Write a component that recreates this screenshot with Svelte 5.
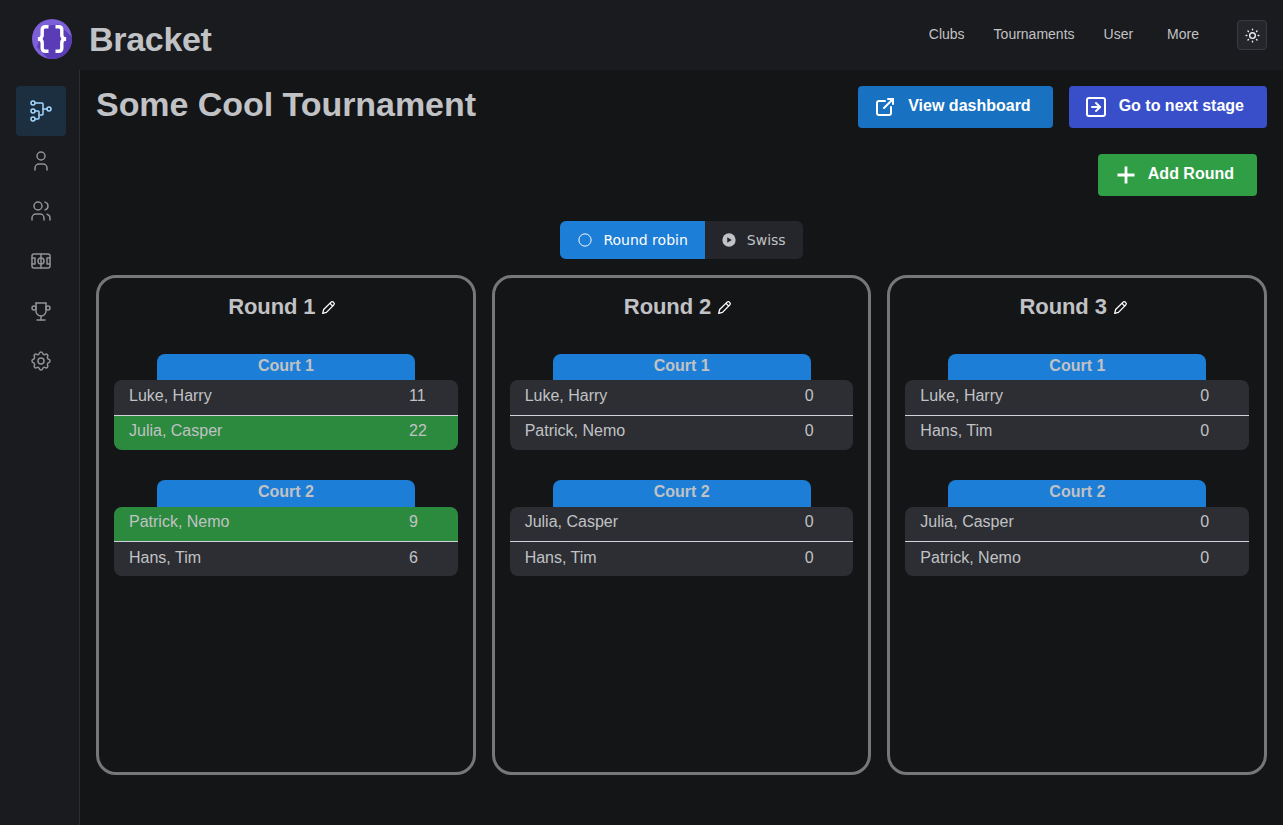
<script>
  const navLinks = ['Clubs', 'Tournaments', 'User', 'More'];

  const sideIcons = [
    { name: 'brackets', active: true, svg: '<circle cx="4" cy="4" r="2"/><circle cx="20" cy="10" r="2"/><circle cx="4" cy="12" r="2"/><circle cx="4" cy="20" r="2"/><path d="M6 12h3a1 1 0 0 1 1 1v6a1 1 0 0 1 -1 1h-3"/><path d="M6 4h7a1 1 0 0 1 1 1v10a1 1 0 0 1 -1 1h-2"/><path d="M14 10h4"/>' },
    { name: 'player', svg: '<circle cx="12" cy="7" r="4"/><path d="M6 21v-2a4 4 0 0 1 4 -4h4a4 4 0 0 1 4 4v2"/>' },
    { name: 'teams', svg: '<circle cx="9" cy="7" r="4"/><path d="M3 21v-2a4 4 0 0 1 4 -4h4a4 4 0 0 1 4 4v2"/><path d="M16 3.13a4 4 0 0 1 0 7.75"/><path d="M21 21v-2a4 4 0 0 0 -3 -3.85"/>' },
    { name: 'courts', svg: '<rect x="3" y="5" width="18" height="14" rx="2"/><path d="M12 5v14"/><circle cx="12" cy="12" r="3"/><path d="M3 9h3v6h-3"/><path d="M21 9h-3v6h3"/>' },
    { name: 'stages', svg: '<path d="M8 21h8"/><path d="M12 17v4"/><path d="M7 4h10"/><path d="M17 4v8a5 5 0 0 1 -10 0v-8"/><circle cx="5" cy="9" r="2"/><circle cx="19" cy="9" r="2"/>' },
    { name: 'settings', svg: '<path d="M10.325 4.317c.426 -1.756 2.924 -1.756 3.35 0a1.724 1.724 0 0 0 2.573 1.066c1.543 -.94 3.31 .826 2.37 2.37a1.724 1.724 0 0 0 1.065 2.572c1.756 .426 1.756 2.924 0 3.35a1.724 1.724 0 0 0 -1.066 2.573c.94 1.543 -.826 3.31 -2.37 2.37a1.724 1.724 0 0 0 -2.572 1.065c-.426 1.756 -2.924 1.756 -3.35 0a1.724 1.724 0 0 0 -2.573 -1.066c-1.543 .94 -3.31 -.826 -2.37 -2.37a1.724 1.724 0 0 0 -1.065 -2.572c-1.756 -.426 -1.756 -2.924 0 -3.35a1.724 1.724 0 0 0 1.066 -2.573c-.94 -1.543 .826 -3.31 2.37 -2.37c1 .608 2.296 .07 2.572 -1.065z"/><circle cx="12" cy="12" r="3"/>' }
  ];

  const rounds = [
    { title: 'Round 1', matches: [
      { court: 'Court 1', teams: [['Luke, Harry', 11], ['Julia, Casper', 22]] },
      { court: 'Court 2', teams: [['Patrick, Nemo', 9], ['Hans, Tim', 6]] }
    ]},
    { title: 'Round 2', matches: [
      { court: 'Court 1', teams: [['Luke, Harry', 0], ['Patrick, Nemo', 0]] },
      { court: 'Court 2', teams: [['Julia, Casper', 0], ['Hans, Tim', 0]] }
    ]},
    { title: 'Round 3', matches: [
      { court: 'Court 1', teams: [['Luke, Harry', 0], ['Hans, Tim', 0]] },
      { court: 'Court 2', teams: [['Julia, Casper', 0], ['Patrick, Nemo', 0]] }
    ]}
  ];

  const isWinner = (teams, i) => teams[i][1] > teams[1 - i][1];
</script>

<header class="topbar">
  <div class="brand">
    <svg class="logo" viewBox="0 0 40 40" aria-hidden="true">
      <clipPath id="disc"><circle cx="20" cy="20" r="20"/></clipPath>
      <circle cx="20" cy="20" r="20" fill="#7d5fd8"/>
      <path d="M13 7L27 5.500L44 22V44H20L5 28z" fill="#5a3cb6" clip-path="url(#disc)"/>
      <path d="M16.500 7.800h-3c-2 0-3.300 1-3.300 3v5.500c0 2-1.500 3.500-4.200 3.700 2.700.2 4.200 1.700 4.200 3.700v5.500c0 2 1.300 3 3.300 3h3M23.500 7.800h3c2 0 3.300 1 3.300 3v5.500c0 2 1.500 3.500 4.200 3.700-2.700.2-4.200 1.700-4.200 3.700v5.500c0 2-1.300 3-3.300 3h-3" fill="none" stroke="#fff" stroke-width="3.400"/>
    </svg>
    <span class="brand-name">Bracket</span>
  </div>
  <nav class="nav">
    {#each navLinks as link}
      <span class="nav-link">{link}</span>
    {/each}
    <button class="theme-btn" aria-label="Toggle theme">
      <svg viewBox="0 0 24 24" class="ic"><circle cx="12" cy="12" r="4"/><path d="M3 12h1m8 -9v1m8 8h1m-9 8v1m-6.400 -15.400l.7 .7m12.100 -.7l-.7 .7m0 11.400l.7 .7m-12.100 -.7l-.7 .7"/></svg>
    </button>
  </nav>
</header>

<div class="shell">
  <aside class="sidebar">
    {#each sideIcons as item}
      <div class="side-item" class:active={item.active} title={item.name}>
        <svg viewBox="0 0 24 24" class="ic">{@html item.svg}</svg>
      </div>
    {/each}
  </aside>

  <main class="main">
    <div class="title-row">
      <h1>Some Cool Tournament</h1>
      <div class="actions">
        <button class="btn blue">
          <svg viewBox="0 0 24 24" class="ic"><path d="M12 6h-6a2 2 0 0 0 -2 2v10a2 2 0 0 0 2 2h10a2 2 0 0 0 2 -2v-6"/><path d="M11 13l9 -9"/><path d="M15 4h5v5"/></svg>
          <span>View dashboard</span>
        </button>
        <button class="btn indigo">
          <svg viewBox="0 0 24 24" class="ic"><rect x="3" y="3" width="18" height="18" rx="2"/><path d="M12 16l4 -4l-4 -4"/><path d="M8 12h8"/></svg>
          <span>Go to next stage</span>
        </button>
      </div>
    </div>

    <div class="add-row">
      <button class="btn green">
        <svg viewBox="0 0 24 24" class="ic plus"><path d="M12 3.500v17M3.500 12h17"/></svg>
        <span>Add Round</span>
      </button>
    </div>

    <div class="segment-row">
      <div class="segment">
        <div class="seg on">
          <svg viewBox="0 0 16 16" class="seg-ic"><circle cx="8" cy="8" r="7" fill="none" stroke="currentColor" stroke-width="1.100"/></svg>
          Round robin
        </div>
        <div class="seg">
          <svg viewBox="0 0 16 16" class="seg-ic"><circle cx="8" cy="8" r="7.600" fill="currentColor"/><path d="M6 4.800v6.400L11.200 8z" fill="#25262b"/></svg>
          Swiss
        </div>
      </div>
    </div>

    <section class="rounds">
      {#each rounds as round}
        <div class="round">
          <h3 class="round-title">
            {round.title}
            <svg viewBox="0 0 16 16" class="pencil"><path d="M1.800 14.200l1-4 7.700-7.700a2 2 0 0 1 3 3l-7.700 7.700z"/><path d="M9.500 3.500l3 3"/></svg>
          </h3>
          {#each round.matches as match}
            <div class="match">
              <div class="court">{match.court}</div>
              <div class="teams">
                {#each match.teams as team, i}
                  <div class="team" class:win={isWinner(match.teams, i)} class:first={i === 0}>
                    <span>{team[0]}</span>
                    <span class="score">{team[1]}</span>
                  </div>
                {/each}
              </div>
            </div>
          {/each}
        </div>
      {/each}
    </section>
  </main>
</div>

<style>
  :global(body) {
    background: #141517;
    color: #c1c2c5;
    font-family: "Liberation Sans", Arial, sans-serif;
  }
  .ic {
    fill: none;
    stroke: currentColor;
    stroke-width: 1.5;
    stroke-linecap: round;
    stroke-linejoin: round;
    flex: none;
  }
  .topbar {
    height: 70px;
    background: #1a1b1e;
    display: flex;
    align-items: flex-start;
    justify-content: space-between;
    padding: 19px 16px 0 32px;
    box-sizing: border-box;
  }
  .brand {
    display: flex;
    align-items: center;
    gap: 17px;
  }
  .logo {
    width: 40px;
    height: 40px;
  }
  .brand-name {
    font-size: 34px;
    font-weight: 700;
    line-height: 40px;
    letter-spacing: -0.3px;
  }
  .nav {
    display: flex;
    align-items: center;
    font-size: 14px;
    margin-top: 1px;
  }
  .nav-link { margin-top: -3px; }
  .nav-link:nth-child(1) { margin-right: 29px; }
  .nav-link:nth-child(2) { margin-right: 29px; }
  .nav-link:nth-child(3) { margin-right: 34px; }
  .nav-link:nth-child(4) { margin-right: 38px; }
  .theme-btn {
    width: 30px;
    height: 30px;
    padding: 0;
    display: flex;
    align-items: center;
    justify-content: center;
    background: #25262b;
    border: 1px solid #373a40;
    border-radius: 4px;
    color: #e9ecef;
  }
  .theme-btn svg {
    width: 17px;
    height: 17px;
    stroke-width: 2;
  }
  .shell {
    display: flex;
    min-height: 755px;
  }
  .sidebar {
    width: 80px;
    box-sizing: border-box;
    flex: none;
    background: #1a1b1e;
    border-right: 1px solid #2c2e33;
    padding: 16px 13px 0 16px;
    display: flex;
    flex-direction: column;
  }
  .side-item {
    width: 50px;
    height: 50px;
    border-radius: 4px;
    display: flex;
    align-items: center;
    justify-content: center;
    color: #909296;
  }
  .side-item svg {
    width: 24px;
    height: 24px;
  }
  .side-item.active {
    background: rgba(34, 139, 230, 0.18);
    color: #a5d8ff;
  }
  .main {
    flex: 1;
    min-width: 0;
    padding: 16px;
  }
  .title-row {
    display: flex;
    justify-content: space-between;
    align-items: flex-start;
  }
  h1 {
    margin: 0;
    font-size: 34px;
    line-height: 37px;
    font-weight: 700;
    letter-spacing: -0.05px;
  }
  .actions {
    display: flex;
    gap: 16px;
  }
  .btn {
    height: 42px;
    border: 0;
    border-radius: 4px;
    display: flex;
    align-items: center;
    color: #fff;
    font: 700 16px "Liberation Sans", Arial, sans-serif;
    padding: 0 23px 0 15px;
    gap: 11px;
  }
  .btn span {
    margin-top: -3px;
  }
  .btn svg {
    width: 24px;
    height: 24px;
    stroke-width: 2;
  }
  .btn svg.plus {
    stroke-width: 2.800;
    stroke-linecap: butt;
    transform: translateX(1px);
  }
  .btn.blue { background: #1971c2; padding-right: 22px; }
  .btn.indigo { background: #384fc9; }
  .btn.green { background: #2f9e44; }
  .add-row {
    display: flex;
    justify-content: flex-end;
    padding-right: 10px;
    margin-top: 26px;
  }
  .segment-row {
    display: flex;
    justify-content: center;
    margin-top: 25px;
  }
  .segment {
    display: flex;
    height: 38px;
    border-radius: 6px;
    overflow: hidden;
    background: #25262b;
    font-family: "DejaVu Sans", sans-serif;
    font-size: 14px;
  }
  .seg {
    display: flex;
    align-items: center;
    gap: 11px;
    padding: 0 17px;
  }
  .seg.on {
    background: #1c7ed6;
    color: #fff;
    padding-left: 18px;
  }
  .seg-ic {
    width: 14px;
    height: 14px;
  }
  .rounds {
    display: grid;
    grid-template-columns: repeat(3, 1fr);
    gap: 16px;
    margin-top: 16px;
  }
  .round {
    height: 500px;
    box-sizing: border-box;
    border: 3px solid #777;
    border-radius: 20px;
    padding: 15px 15px 0;
  }
  .round-title {
    margin: 0 0 33px;
    height: 28px;
    display: flex;
    align-items: center;
    justify-content: center;
    gap: 6px;
    font-size: 22px;
    font-weight: 700;
    letter-spacing: -0.1px;
  }
  .pencil {
    width: 15px;
    height: 15px;
    margin-right: 7px;
    fill: none;
    stroke: #fff;
    stroke-width: 1.400;
    stroke-linejoin: round;
  }
  .match {
    margin-bottom: 30.300px;
  }
  .court {
    width: 258px;
    margin-left: 43px;
    height: 26.400px;
    box-sizing: border-box;
    background: #1c7ed6;
    border-radius: 8px 8px 0 0;
    text-align: center;
    font-weight: 700;
    font-size: 16px;
    line-height: 23px;
  }
  .teams {
    border-radius: 8px;
    overflow: hidden;
    background: #2c2e33;
  }
  .team {
    height: 34.400px;
    padding-top: 0.750px;
    box-sizing: border-box;
    display: grid;
    grid-template-columns: 280px 1fr;
    align-items: start;
    padding-left: 15px;
    font-size: 16px;
    line-height: 30px;
  }
  .team.first {
    height: 35.200px;
    padding-top: 0.300px;
    border-bottom: 1px solid #ced4da;
  }
  .team.win {
    background: #2b8a3e;
  }
</style>
